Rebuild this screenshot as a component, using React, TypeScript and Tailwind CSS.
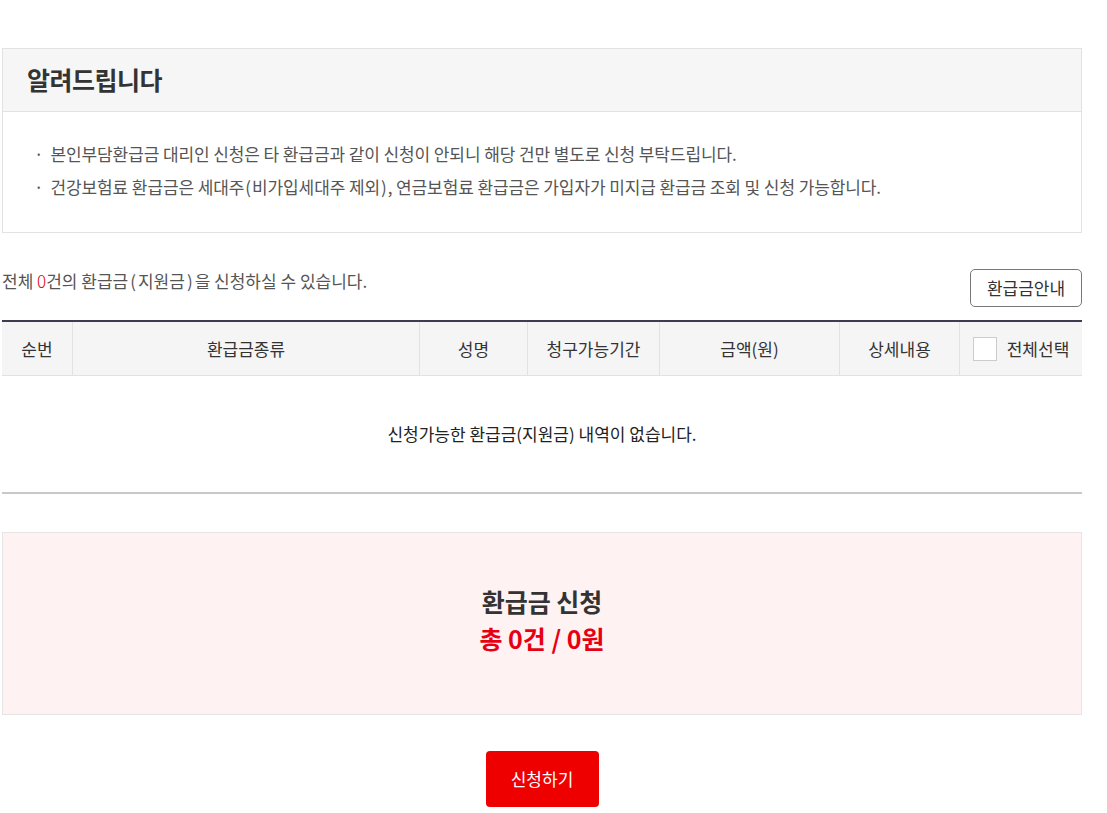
import React from "react";

const cols = [
  { label: "순번", w: "w-[71px]" },
  { label: "환급금종류", w: "w-[347px]" },
  { label: "성명", w: "w-[108px]" },
  { label: "청구가능기간", w: "w-[132px]" },
  { label: "금액(원)", w: "w-[180px]" },
  { label: "상세내용", w: "w-[120px]" },
];

export default function App() {
  return (
    <div
      className="min-h-screen bg-white px-[2px] pt-[48px] text-[#333]"
      style={{ fontFamily: '"Noto Sans CJK KR", "Noto Sans", sans-serif' }}
    >
      <div className="w-[1080px]">
        {/* 알려드립니다 */}
        <div className="border border-[#e2e2e2]">
          <div className="flex h-[63px] items-center border-b border-[#e2e2e2] bg-[#f6f6f6] px-[24px]">
            <h2 className="text-[25px] font-bold tracking-[-0.5px] text-[#333]">알려드립니다</h2>
          </div>
          <ul className="flex flex-col gap-[10px] px-[31px] pt-[30px] pb-[34px] text-[17px] leading-[23px] tracking-[-0.1px] text-[#555]">
            <li className="flex gap-[7px]">
              <span>·</span>
              <span>본인부담환급금 대리인 신청은 타 환급금과 같이 신청이 안되니 해당 건만 별도로 신청 부탁드립니다.</span>
            </li>
            <li className="flex gap-[7px]">
              <span>·</span>
              <span>
                건강보험료 환급금은 세대주<span className="mx-[1px]">(</span>비가입세대주 제외<span className="mx-[1px]">)</span>, 연금보험료 환급금은 가입자가 미지급 환급금 조회 및 신청 가능합니다.
              </span>
            </li>
          </ul>
        </div>

        {/* 안내 + 버튼 */}
        <div className="mt-[33px] flex items-start justify-between">
          <p className="pt-[2px] text-[17px] leading-[26px] text-[#555]">
            전체 <span className="font-light text-[#e60012]">0</span>건의 환급금<span className="mx-[2px]">(</span>지원금<span className="mx-[2px]">)</span>을 신청하실 수 있습니다.
          </p>
          <button className="mt-[3px] h-[38px] w-[112px] rounded-[5px] border border-[#777] bg-white text-[17px] text-[#333]">
            환급금안내
          </button>
        </div>

        {/* 테이블 */}
        <div className="mt-[13px] border-t-2 border-[#3d3d4f]">
          <div className="flex h-[54px] border-b border-[#e2e2e2] bg-[#f5f5f5] text-[17px] text-[#333]">
            {cols.map((c) => (
              <div
                key={c.label}
                className={`${c.w} flex items-center justify-center border-r border-[#e2e2e2]`}
              >
                {c.label}
              </div>
            ))}
            <div className="flex flex-1 items-center justify-center gap-[10px]">
              <span className="h-[24px] w-[24px] border border-[#ccc] bg-white" />
              <span>전체선택</span>
            </div>
          </div>
          <div className="flex h-[118px] items-center justify-center border-b-2 border-[#c8c8c8] text-[17px] text-[#222]">
            신청가능한 환급금(지원금) 내역이 없습니다.
          </div>
        </div>

        {/* 신청 합계 */}
        <div className="mt-[38px] flex h-[183px] flex-col items-center justify-center border border-[#e5e5e5] bg-[#fff2f2] pb-[7px]">
          <p className="text-[25px] font-bold leading-[37px] text-[#333]">환급금 신청</p>
          <p className="text-[25px] font-bold leading-[37px] text-[#e60012]">총 0건 / 0원</p>
        </div>

        <div className="mt-[36px] flex justify-center pb-[6px]">
          <button className="h-[56px] w-[113px] rounded-[4px] bg-[#ee0000] text-[17px] text-white">
            신청하기
          </button>
        </div>
      </div>
    </div>
  );
}
